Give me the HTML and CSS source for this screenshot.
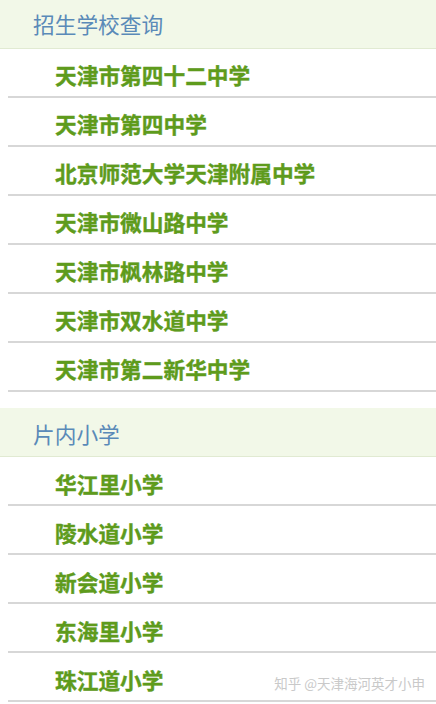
FILE: index.html
```html
<!DOCTYPE html>
<html lang="zh-CN">
<head>
    <meta charset="UTF-8">
    <meta name="viewport" content="width=device-width, initial-scale=1.0">
    <title>招生学校查询</title>
    <link rel="stylesheet" href="styles.css">
</head>
<body>
    <div class="section">
        <h3 class="section-title">招生学校查询</h3>
        <ul class="school-list">
            <li>天津市第四十二中学</li>
            <li>天津市第四中学</li>
            <li>北京师范大学天津附属中学</li>
            <li>天津市微山路中学</li>
            <li>天津市枫林路中学</li>
            <li>天津市双水道中学</li>
            <li>天津市第二新华中学</li>
        </ul>
    </div>
    <div class="section">
        <h3 class="section-title">片内小学</h3>
        <ul class="school-list">
            <li>华江里小学</li>
            <li>陵水道小学</li>
            <li>新会道小学</li>
            <li>东海里小学</li>
            <li>珠江道小学</li>
        </ul>
    </div>
    <div class="watermark">知乎 @天津海河英才小申</div>
</body>
</html>
```

FILE: styles.css
```css
body {
    margin: 0;
    background: #fff;
    font-family: "Noto Sans CJK SC", "Microsoft YaHei", sans-serif;
    position: relative;
    overflow: hidden;
}
.section + .section {
    margin-top: 16px;
}
.section-title {
    margin: 0;
    height: 48px;
    line-height: 48px;
    padding-left: 33px;
    background: #f2f8e8;
    border-bottom: 1px solid #e1ead2;
    color: #5a8ab8;
    font-size: 21.7px;
    font-weight: normal;
}
.section + .section .section-title {
    line-height: 51px;
}
.school-list {
    list-style: none;
    margin: 0 0 0 8px;
    padding: 0;
}
.school-list li {
    height: 47px;
    line-height: 51px;
    padding-left: 47px;
    border-bottom: 2px solid #d7d7d7;
    color: #5e9b1c;
    font-size: 21.7px;
    font-weight: bold;
    -webkit-text-stroke: 0.4px #5e9b1c;
}
.section + .section .school-list li {
    line-height: 53px;
}
.watermark {
    position: absolute;
    right: 11px;
    bottom: 9px;
    color: #c9c9c9;
    font-size: 13.5px;
}
```
